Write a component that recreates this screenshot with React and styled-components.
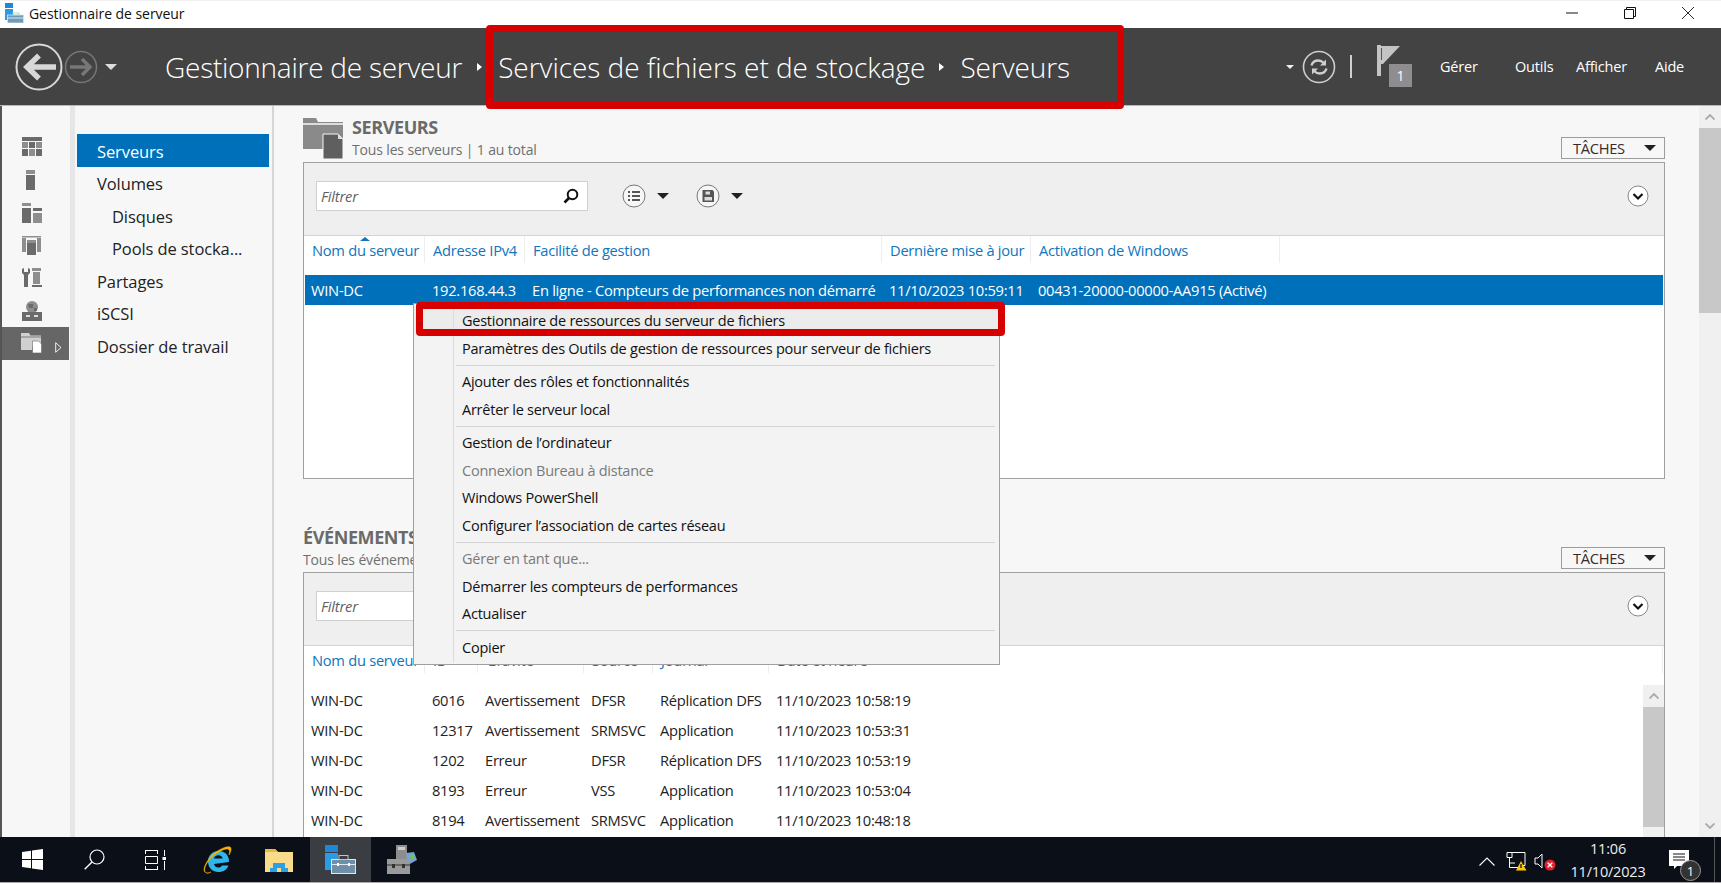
import React from "react";
import styled, { createGlobalStyle } from "styled-components";

const FONT = `"Open Sans", "Noto Sans", "Liberation Sans", sans-serif`;

const Global = createGlobalStyle`
  html, body { margin: 0; padding: 0; background: #fff; overflow: hidden; }
  * { box-sizing: border-box; }
  body { font-family: ${FONT}; }
`;

const Root = styled.div`
  position: relative; width: 1721px; height: 883px; overflow: hidden;
  display: flex; flex-direction: column; font-size: 14.5px; color: #1a1a1a;
`;

/* ---------- title bar ---------- */
const TitleBar = styled.div`
  height: 28px; flex: none; display: flex; align-items: center; padding-left: 4px; background: #fff; border-top: 1px solid #f2f2f2;
`;
const TitleText = styled.span`margin-left: 5px; font-size: 14px; color: #111; letter-spacing: -0.06px; margin-top: -3px;`;
const WinControls = styled.div`margin-left: auto; display: flex; height: 100%; align-items: center; padding-right: 27px; gap: 46px; padding-bottom: 3px;`;

/* ---------- header ---------- */
const Header = styled.header`
  height: 78px; flex: none; background: #434343; border-bottom: 1px solid #b9b9b9; display: flex; align-items: center; padding-left: 15px; color: #fff;
`;
const NavGroup = styled.div`display: flex; align-items: center; width: 150px; gap: 1px;`;
const Crumbs = styled.div`display: flex; align-items: center; font-weight: 300; font-size: 28px; padding-top: 1px;`;
const Crumb = styled.span`white-space: nowrap; color: #fff; margin-left: ${p => p.$ml || 0}px; letter-spacing: ${p => p.$ls || 0}px;`;
const Tri = styled.span`
  display: inline-block; width: 0; height: 0; margin-left: ${p => p.$ml || 0}px;
  border-left: 5px solid #fff; border-top: 4.5px solid transparent; border-bottom: 4.5px solid transparent;
`;
const HeaderRight = styled.div`margin-left: auto; display: flex; align-items: center; height: 100%;`;
const MenuLink = styled.span`
  font-size: 14.5px; color: #fff; width: ${p => p.$w}px; letter-spacing: -0.2px;
`;
const FlagWrap = styled.div`position: relative; width: 36px; height: 44px; margin-left: 25px; margin-right: 27px;`;
const FlagBadge = styled.div`
  position: absolute; left: 12px; top: 19px; width: 23px; height: 23px; background: #8f8d90; color: #fff;
  font-size: 14px; display: flex; align-items: center; justify-content: center;
`;
const HeaderSep = styled.div`width: 2px; height: 23px; background: #cfcfcf; margin-left: 14px;`;

/* ---------- body ---------- */
const Body = styled.div`flex: 1; min-height: 0; display: flex; background: #f7f7f7; border-left: 2px solid #555;`;
const Rail = styled.nav`
  width: 73px; flex: none; border-right: 5px solid #e6e6e6; padding-top: 25px; display: flex; flex-direction: column; background: #f7f7f7;
`;
const RailItem = styled.div`
  height: 32.7px; display: flex; align-items: center; padding-left: 19px; position: relative; width: 67px; flex: none;
  background: ${p => (p.$active ? "#666" : "transparent")};
`;
const RailArrow = styled.span`
  position: absolute; left: 53px; top: 11px; width: 7px; height: 11px;
`;
const SideNav = styled.nav`
  width: 199px; flex: none; border-right: 2px solid #d6d6d6; padding: 28px 0 0 2px; background: #f7f7f7; display: flex; flex-direction: column;
`;
const NavItem = styled.div`
  height: 32.5px; width: 192px; display: flex; align-items: center; padding-left: ${p => (p.$sub ? 35 : 20)}px; padding-top: 2px; font-size: 16.5px; letter-spacing: -0.1px;
  background: ${p => (p.$active ? "#0070bb" : "transparent")}; color: ${p => (p.$active ? "#fff" : "#222")};
`;
const Main = styled.main`flex: 1; min-width: 0; overflow: hidden; padding-left: 29px; display: flex; flex-direction: column; padding-right: 34px;`;
const PageScroll = styled.div`
  width: 22px; flex: none; background: #f0f0f0; display: flex; flex-direction: column; align-items: stretch; position: relative;
`;
const ScrollBtn = styled.div`height: 22px; display: flex; align-items: center; justify-content: center; flex: none;`;
const ScrollThumb = styled.div`height: ${p => p.$h}px; background: #c8c8c8; flex: none;`;
const ScrollFill = styled.div`flex: 1;`;

const SectionHead = styled.div`
  height: ${p => p.$h}px; display: flex; align-items: flex-end; position: relative; flex: none; margin-top: ${p => p.$mt || 0}px;
`;
const SectionIcon = styled.div`width: 49px; align-self: flex-start; padding-top: 12px;`;
const Titles = styled.div`display: flex; flex-direction: column; padding-bottom: 3px;`;
const SectionTitle = styled.div`font-size: 18px; font-weight: 700; color: #6a6a6a; line-height: 24px; letter-spacing: -0.4px; padding-bottom: 1px;`;
const SectionSub = styled.div`font-size: 14px; color: #6f6f6f; line-height: 19px; letter-spacing: -0.15px;`;
const TasksBtn = styled.div`
  margin-left: auto; width: 104px; height: 22px; margin-bottom: 3px; border: 1px solid #9d9d9d; background: #f7f7f7; display: flex; align-items: center;
  padding-left: 11px; font-size: 14.7px; color: #3a2a2a; justify-content: space-between; padding-right: 8px; letter-spacing: -0.3px;
`;
const Caret = styled.span`
  display: inline-block; width: 0; height: 0; border-left: ${p => p.$s || 6}px solid transparent; border-right: ${p => p.$s || 6}px solid transparent;
  border-top: ${p => p.$s || 6}px solid ${p => p.$c || "#222"};
  ${p => p.$ml && `margin-left: ${p.$ml}px;`} ${p => p.$mr && `margin-right: ${p.$mr}px;`}
`;

const Panel = styled.section`
  flex: none; height: ${p => p.$h}px; border: 1px solid #a0a0a0; background: #fff; display: flex; flex-direction: column; padding: 0 1px;
  ${p => p.$open && "border-bottom: 0;"}
`;
const Toolbar = styled.div`
  height: 73px; flex: none; background: #efefef; border-bottom: 1px solid #d4d4d4; margin: 0 -1px; display: flex; align-items: center; padding-left: 12px; padding-right: 15px; padding-bottom: 6px;
`;
const FilterBox = styled.div`
  width: 272px; height: 30px; border: 1px solid #cfcfcf; background: #fff; display: flex; align-items: center; padding: 0 8px 0 4px; justify-content: space-between;
  font-style: italic; color: #5f5f5f; font-size: 14.7px; letter-spacing: -0.2px;
`;
const ToolGroup = styled.div`display: flex; align-items: center; gap: 11px; margin-left: ${p => p.$ml}px;`;
const RightEnd = styled.div`margin-left: auto; padding-top: 3px;`;

const Cols = styled.div`
  display: grid; grid-template-columns: ${p => p.$cols};
`;
const HeadRow = styled(Cols)`height: 39px; flex: none; background: #fff; position: relative;`;
const HeadCell = styled.div`
  font-size: 14.7px; color: #0f75bc; padding: 1px 0 0 8px; height: 27px; display: flex; align-items: center; white-space: nowrap; letter-spacing: -0.28px;
  border-right: 1px solid #eee; overflow: hidden;
  &:first-of-type { padding-left: 7px; }
`;
const SortMark = styled.span`
  position: absolute; left: 55px; top: 1px; width: 0; height: 0; border-left: 5px solid transparent; border-right: 5px solid transparent; border-bottom: 4px solid #0f75bc;
`;
const DataRow = styled(Cols)`
  height: ${p => p.$h || 30}px; align-items: center;
  background: ${p => (p.$sel ? "#0070bb" : "#fff")}; color: ${p => (p.$sel ? "#fff" : "#222")};
`;
const DataCell = styled.div`
  font-size: 14.7px; padding-left: 7px; white-space: nowrap; letter-spacing: -0.28px;
  &:first-child { padding-left: 6px; }
`;
const RowsWrap = styled.div`display: flex; flex: 1; min-height: 0;`;
const RowsCol = styled.div`flex: 1; min-width: 0;`;
const InnerScroll = styled.div`width: 21px; margin-right: -1px; flex: none; background: #f0f0f0; display: flex; flex-direction: column;`;

/* ---------- context menu ---------- */
const Menu = styled.div`
  position: absolute; left: 413px; top: 303px; width: 587px; height: 362px; background: #f3f3f3; border: 1px solid #a0a0a0; padding: 3px 0 0 0; z-index: 5;
`;
const MenuGutter = styled.div`position: absolute; left: 39px; top: 1px; bottom: 1px; width: 1px; background: #dcdcdc;`;
const MenuRow = styled.div`
  height: 27.5px; display: flex; align-items: center; padding-left: 48px; font-size: 14.5px; letter-spacing: -0.24px; white-space: nowrap;
  color: ${p => (p.$off ? "#7a7a7a" : "#111")}; background: ${p => (p.$hot ? "#ececec" : "transparent")};
`;
const MenuSep = styled.div`height: 6px; display: flex; align-items: center; margin-left: 42px; margin-right: 4px; &::after { content: ""; flex: 1; height: 1px; background: #d4d4d4; }`;

const RedBox = styled.div`
  position: absolute; left: ${p => p.$x}px; top: ${p => p.$y}px; width: ${p => p.$w}px; height: ${p => p.$h}px; border: 7px solid #d60000; border-radius: 4px; z-index: 9; pointer-events: none;
`;

/* ---------- taskbar ---------- */
const Taskbar = styled.footer`
  height: 46px; flex: none; background: #0a0f18; border-bottom: 1px solid #aaa; display: flex; align-items: center; color: #fff; padding-left: 2px;
`;
const TaskBtn = styled.div`
  width: 61.5px; height: 100%; display: flex; align-items: center; justify-content: center; background: ${p => (p.$active ? "#3a3d42" : "transparent")};
`;
const Tray = styled.div`margin-left: auto; display: flex; align-items: center; height: 100%;`;
const TrayIcon = styled.div`width: ${p => p.$w}px; display: flex; justify-content: center; padding-top: 4px;`;
const Clock = styled.div`
  width: 90px; margin-left: 5px; display: flex; flex-direction: column; align-items: center; font-size: 14.5px; line-height: 23px; color: #eee; letter-spacing: -0.2px;
`;
const Notif = styled.div`position: relative; width: 50px; height: 100%; margin-left: 11px; display: flex; align-items: center; padding-left: 5px;`;
const NotifBadge = styled.div`
  position: absolute; left: 16px; top: 23px; width: 21px; height: 21px; border-radius: 50%; background: #333; border: 1.5px solid #999; color: #fff; font-size: 13px;
  display: flex; align-items: center; justify-content: center;
`;
const Corner = styled.div`width: 1px; height: 100%; background: #555; margin-right: 6px;`;

/* ---------- icons ---------- */
const TitleIcon = () => (
  <svg width="20" height="20" viewBox="0 0 20 20" style={{ marginTop: -3 }}>
    <rect x="1" y="0" width="8" height="5" fill="#1e88d8" />
    <rect x="1" y="6" width="8" height="11" fill="#2b9be8" />
    <rect x="3.500" y="12" width="16" height="8" fill="#6f9ab8" stroke="#d5e4ee" strokeWidth=".8" />
    <rect x="3.500" y="14.500" width="16" height="1" fill="#dbe7ef" />
    <rect x="9" y="10" width="6" height="2" fill="none" stroke="#9db" strokeWidth=".8" />
  </svg>
);
const TaskServerIcon = () => (
  <svg width="31" height="29" viewBox="0 0 31 29">
    <rect x="0" y="0" width="13" height="7" fill="#1e88d8" />
    <rect x="0" y="8" width="13" height="17" fill="#2b9be8" />
    <rect x="6.500" y="14.500" width="24" height="14" fill="#6f8fa8" stroke="#dde8ef" strokeWidth="1" />
    <rect x="14" y="10.500" width="9" height="4" fill="none" stroke="#b7c7d2" strokeWidth="1" />
    <rect x="6.500" y="19" width="24" height="1" fill="#dde8ef" />
    <rect x="12" y="18" width="2" height="3" fill="#fff" />
    <rect x="23" y="18" width="2" height="3" fill="#fff" />
  </svg>
);
const BackIcon = () => (
  <svg width="48" height="48" viewBox="0 0 48 48">
    <circle cx="24" cy="24" r="22.500" fill="none" stroke="#d8d8d8" strokeWidth="2" />
    <path d="M41 24H14M24 12.500 12 24l12 11.500" fill="none" stroke="#d8d8d8" strokeWidth="5.500" />
  </svg>
);
const ForwardIcon = () => (
  <svg width="34" height="34" viewBox="0 0 34 34">
    <circle cx="17" cy="17" r="15.500" fill="none" stroke="#777" strokeWidth="1.500" />
    <path d="M6 17h20M18 9l8 8-8 8" fill="none" stroke="#777" strokeWidth="3.500" />
  </svg>
);
const RefreshIcon = () => (
  <svg width="34" height="34" viewBox="0 0 34 34">
    <circle cx="17" cy="17" r="15.500" fill="none" stroke="#cfcfcf" strokeWidth="1.600" />
    <path d="M9.500 15.500c1-3.500 3.800-5 6.800-5 2.400 0 4 1 5.200 2.300" fill="none" stroke="#cfcfcf" strokeWidth="2.400" />
    <path d="M24 9.500v6h-6z" fill="#cfcfcf" />
    <path d="M24.500 18.500c-1 3.500-3.800 5-6.800 5-2.400 0-4-1-5.200-2.300" fill="none" stroke="#cfcfcf" strokeWidth="2.400" />
    <path d="M10 24.500v-6h6z" fill="#cfcfcf" />
  </svg>
);
const FlagIcon = () => (
  <svg width="24" height="32" viewBox="0 0 24 32">
    <rect x="0" y="0" width="4" height="31" fill="#c4c4c4" />
    <path d="M4 1h19L6 19H4z" fill="#c4c4c4" />
    <rect x="4" y="3" width="1" height="12" fill="#555" />
  </svg>
);
const G = "#6b6b6b", L = "#8e8e8e";
const RailGrid = () => (
  <svg width="22" height="20" viewBox="0 0 22 20">
    <rect x="1" y="0" width="20" height="4" fill={G} />
    <rect x="1" y="5" width="6" height="6" fill={L} /><rect x="8" y="5" width="6" height="6" fill={G} /><rect x="15" y="5" width="6" height="6" fill={L} />
    <rect x="1" y="12" width="6" height="7" fill={G} /><rect x="8" y="12" width="6" height="7" fill={L} /><rect x="15" y="12" width="6" height="7" fill={G} />
  </svg>
);
const RailServer = () => (
  <svg width="22" height="20" viewBox="0 0 22 20">
    <rect x="5" y="0" width="9" height="4" fill={L} /><rect x="5" y="5" width="9" height="15" fill={G} />
  </svg>
);
const RailAll = () => (
  <svg width="22" height="20" viewBox="0 0 22 20">
    <rect x="1" y="0" width="9" height="3" fill={L} /><rect x="1" y="5" width="9" height="15" fill={G} />
    <rect x="12" y="5" width="9" height="3" fill={G} /><rect x="12" y="10" width="9" height="10" fill={L} />
  </svg>
);
const RailAd = () => (
  <svg width="22" height="20" viewBox="0 0 22 20">
    <path d="M1 1h19v1.500H1z" fill={L} />
    <rect x="1" y="3" width="4" height="14" fill={L} /><rect x="16" y="3" width="4" height="14" fill={L} />
    <rect x="6" y="5" width="9" height="15" fill={G} /><rect x="6" y="5" width="9" height="3" fill={L} />
  </svg>
);
const RailTools = () => (
  <svg width="22" height="20" viewBox="0 0 22 20">
    <path d="M1 1v4l2 2v12h4V7l2-2V1L7 0v4H3V0z" fill={G} />
    <rect x="11" y="0" width="9" height="3" fill={L} /><rect x="12" y="4" width="7" height="12" fill={L} />
    <rect x="11" y="17" width="10" height="2" fill={G} />
  </svg>
);
const RailDns = () => (
  <svg width="22" height="20" viewBox="0 0 22 20">
    <circle cx="11" cy="6" r="6" fill={L} /><path d="M7 3h5v4H8zM13 7h3v3h-3z" fill={G} />
    <rect x="1" y="11" width="20" height="9" fill={G} /><rect x="5" y="14" width="4" height="2" fill="#ddd" /><rect x="13" y="14" width="4" height="2" fill="#ddd" />
  </svg>
);
const RailFiles = () => (
  <svg width="21" height="20" viewBox="0 0 21 20">
    <path d="M0 0h8l1.500 2.500H20V14h-9v3H0z" fill="#d0d0d0" />
    <path d="M0 4h20" stroke="#666" strokeWidth=".8" />
    <path d="M11.500 8h6l3 3v9h-9z" fill="#fff" stroke="#666" strokeWidth=".6" />
  </svg>
);
const FolderIcon = () => (
  <svg width="41" height="41" viewBox="0 0 41 41">
    <path d="M0 0h13l2 4h25v37H20V31H0z" fill="#8a8a8a" />
    <path d="M0 6h40" stroke="#f7f7f7" strokeWidth="1.500" />
    <path d="M20 16h15l5 5v20H20z" fill="#5f5f5f" stroke="#f7f7f7" strokeWidth="1" />
    <path d="M35 16v5h5" fill="#ddd" />
  </svg>
);
const SearchIcon = () => (
  <svg width="16" height="16" viewBox="0 0 16 16">
    <circle cx="9.500" cy="6.500" r="4.800" fill="none" stroke="#111" strokeWidth="2" />
    <path d="M6 10 1.500 14.500" stroke="#111" strokeWidth="2.600" />
  </svg>
);
const TaskSearch = () => (
  <svg width="21" height="21" viewBox="0 0 21 21">
    <circle cx="13" cy="8" r="7" fill="none" stroke="#fff" strokeWidth="1.200" />
    <path d="M8 13 .7 20.300" stroke="#fff" strokeWidth="1.400" />
  </svg>
);
const ListCircle = () => (
  <svg width="24" height="24" viewBox="0 0 24 24">
    <circle cx="12" cy="12" r="11" fill="#f6f6f6" stroke="#777" strokeWidth="1" />
    <path d="M6 8h2M6 12h2M6 16h2M10 8h8M10 12h8M10 16h8" stroke="#555" strokeWidth="2" />
  </svg>
);
const SaveCircle = () => (
  <svg width="24" height="24" viewBox="0 0 24 24">
    <circle cx="12" cy="12" r="11" fill="#f6f6f6" stroke="#777" strokeWidth="1" />
    <path d="M6.500 6h10l1.500 1.500V18H6.500z" fill="#555" />
    <rect x="9.500" y="7.500" width="4.500" height="3" fill="#ddd" />
    <rect x="8.500" y="13" width="7.500" height="3.500" fill="#ddd" />
  </svg>
);
const ChevCircle = () => (
  <svg width="22" height="22" viewBox="0 0 22 22">
    <circle cx="11" cy="11" r="10" fill="#fff" stroke="#888" strokeWidth="1" />
    <path d="M6.500 9 11 13.500 15.500 9" fill="none" stroke="#111" strokeWidth="2.200" />
  </svg>
);
const ChevUp = () => <svg width="10" height="6" viewBox="0 0 10 6"><path d="M.5 5.500 5 1l4.500 4.500" fill="none" stroke="#aaa" strokeWidth="1.800" /></svg>;
const ChevDown = () => <svg width="10" height="6" viewBox="0 0 10 6"><path d="M.5.500 5 5l4.500-4.500" fill="none" stroke="#aaa" strokeWidth="1.800" /></svg>;

const WinLogo = () => (
  <svg width="21" height="21" viewBox="0 0 21 21">
    <path d="M0 3 9 1.700V10H0zM10 1.500 21 0v10H10zM0 11h9v8.300L0 18zM10 11h11v10L10 19.500z" fill="#fff" />
  </svg>
);
const TaskView = () => (
  <svg width="21" height="20" viewBox="0 0 21 20" fill="none" stroke="#fff" strokeWidth="1">
    <path d="M0 .500h13M.500 6.500h12v7H.500zM0 19.500h13M19.500 0v6M19.500 11v9" />
    <rect x="17.500" y="7" width="4" height="3" fill="#fff" stroke="none" />
    <path d="M.5 1v3M12.500 1v3M.5 16v3M12.500 16v3" />
  </svg>
);
const IeIcon = () => (
  <svg width="30" height="30" viewBox="0 0 30 30">
    <path d="M27 17c.3-6.500-4-11-10.500-11C9.500 6 6 11.500 6 16.500 6 23 11 27 16.500 27c4.500 0 8.300-2 10-6.500h-6.500c-1 1.500-2 2-3.500 2-2.500 0-4.300-1.800-4.500-3.500zM12 13.500c.3-2 2-3.300 4.400-3.300s4 1.300 4.300 3.300z" fill="#2fb7ec" fillRule="evenodd" />
    <path d="M3 27C-1 25 7 11 14 7c6-4 11-6 14-5 2 1 1 5-1 8 .5-2.500 1-5-.7-5.800C23 3 17 7 14 9 7 14 1 22 3 27c1 1.500 4 1 6 0-2 1.500-5 1.500-6 0z" fill="#f4b400" stroke="#f4b400" strokeWidth=".5" />
  </svg>
);
const ExplorerIcon = () => (
  <svg width="28" height="24" viewBox="0 0 28 24">
    <path d="M0 1h10l3 3h15v20H0z" fill="#f8dc8c" />
    <path d="M0 1h10l3 3H0z" fill="#e8b93e" />
    <path d="M5 24v-4h3v-5h12v5h3v4h-7v-4h-4v4z" fill="#2aa1e6" />
  </svg>
);
const ToolboxIcon = () => (
  <svg width="32" height="32" viewBox="0 0 32 32">
    <rect x="10" y="1" width="11" height="18" fill="#8d8d8d" />
    <rect x="12" y="3" width="7" height="3" fill="#ccc" />
    <path d="M20 9l8-1 3 8-9 5z" fill="#7b9fd6" />
    <path d="M25 10l4 1-2 4-4-1z" fill="#69c95a" />
    <path d="M1 15h21l2 6v9H1z" fill="#9a9a9a" /><path d="M1 21h23" stroke="#555" strokeWidth="1.500" />
    <rect x="6" y="20" width="3" height="4" fill="#333" /><rect x="16" y="20" width="3" height="4" fill="#333" />
  </svg>
);
const NetIcon = () => (
  <svg width="22" height="19" viewBox="0 0 22 19">
    <path d="M3 .500h16v13h-6M1 .500h5v5H1zM3.500 5.500v10M3.500 15.500H12M3.500 11H9" fill="none" stroke="#fff" strokeWidth="1" />
    <path d="M10 18.500 15 9l5.500 9.500z" fill="#fbc707" /><path d="M15 12v4" stroke="#111" strokeWidth="1.300" />
  </svg>
);
const SpeakerIcon = () => (
  <svg width="22" height="19" viewBox="0 0 22 19">
    <path d="M1 6h3l4-4v14l-4-4H1z" fill="none" stroke="#fff" strokeWidth="1" />
    <circle cx="16" cy="13" r="5.500" fill="#e2202f" />
    <path d="M13.700 10.700l4.600 4.600m0-4.600-4.600 4.600" stroke="#fff" strokeWidth="1.300" />
  </svg>
);
const NotifIcon = () => (
  <svg width="21" height="19" viewBox="0 0 21 19">
    <path d="M0 0h20v16H8l-3 3v-3H0z" fill="#fff" />
    <path d="M4 4h12M4 7h12M4 10h12" stroke="#111" strokeWidth="1.200" />
  </svg>
);
const ChevTray = () => <svg width="16" height="9" viewBox="0 0 16 9"><path d="M.5 8.500 8 1l7.500 7.500" fill="none" stroke="#fff" strokeWidth="1.100" /></svg>;

/* ---------- data ---------- */
const navItems = [
  { t: "Serveurs", active: true }, { t: "Volumes" }, { t: "Disques", sub: true },
  { t: "Pools de stocka...", sub: true }, { t: "Partages" }, { t: "iSCSI" }, { t: "Dossier de travail" },
];
const SERVER_COLS = "120px 100px 357px 149px 249px 1fr";
const EVENT_COLS = "120px 53px 106px 69px 116px 1fr";
const events = [
  ["WIN-DC", "6016", "Avertissement", "DFSR", "Réplication DFS", "11/10/2023 10:58:19"],
  ["WIN-DC", "12317", "Avertissement", "SRMSVC", "Application", "11/10/2023 10:53:31"],
  ["WIN-DC", "1202", "Erreur", "DFSR", "Réplication DFS", "11/10/2023 10:53:19"],
  ["WIN-DC", "8193", "Erreur", "VSS", "Application", "11/10/2023 10:53:04"],
  ["WIN-DC", "8194", "Avertissement", "SRMSVC", "Application", "11/10/2023 10:48:18"],
];
const menu = [
  { t: "Gestionnaire de ressources du serveur de fichiers", hot: true },
  { t: "Paramètres des Outils de gestion de ressources pour serveur de fichiers" }, "-",
  { t: "Ajouter des rôles et fonctionnalités" }, { t: "Arrêter le serveur local" }, "-",
  { t: "Gestion de l’ordinateur" }, { t: "Connexion Bureau à distance", off: true },
  { t: "Windows PowerShell" }, { t: "Configurer l’association de cartes réseau" }, "-",
  { t: "Gérer en tant que...", off: true }, { t: "Démarrer les compteurs de performances" }, { t: "Actualiser" }, "-",
  { t: "Copier" },
];

const TableToolbar = () => (
  <Toolbar>
    <FilterBox>Filtrer<SearchIcon /></FilterBox>
    <ToolGroup $ml={34}><ListCircle /><Caret /></ToolGroup>
    <ToolGroup $ml={27}><SaveCircle /><Caret /></ToolGroup>
    <RightEnd><ChevCircle /></RightEnd>
  </Toolbar>
);

export default function App() {
  const railIcons = [RailGrid, RailServer, RailAll, RailAd, RailTools, RailDns];
  return (
    <Root>
      <Global />
      <TitleBar>
        <TitleIcon />
        <TitleText>Gestionnaire de serveur</TitleText>
        <WinControls>
          <svg width="12" height="2" viewBox="0 0 12 2"><path d="M0 1h12" stroke="#111" /></svg>
          <svg width="12" height="12" viewBox="0 0 12 12"><path d="M.5 2.500h9v9h-9zM2.500 2.500V.5h9v9h-2" fill="none" stroke="#111" /></svg>
          <svg width="12" height="12" viewBox="0 0 12 12"><path d="M0 0l12 12M12 0 0 12" stroke="#111" strokeWidth=".9" /></svg>
        </WinControls>
      </TitleBar>

      <Header>
        <NavGroup>
          <BackIcon /><ForwardIcon />
          <Caret $s={6} $c="#ddd" $ml={6} />
        </NavGroup>
        <Crumbs>
          <Crumb $ls={-0.25}>Gestionnaire de serveur</Crumb>
          <Tri $ml={15} />
          <Crumb $ml={16} $ls={-0.03}>Services de fichiers et de stockage</Crumb>
          <Tri $ml={14} />
          <Crumb $ml={16} $ls={-0.1}>Serveurs</Crumb>
        </Crumbs>
        <HeaderRight>
          <Caret $s={4} $c="#eee" $mr={8} />
          <RefreshIcon />
          <HeaderSep />
          <FlagWrap><FlagIcon /><FlagBadge>1</FlagBadge></FlagWrap>
          <MenuLink $w={75}>Gérer</MenuLink>
          <MenuLink $w={61}>Outils</MenuLink>
          <MenuLink $w={79}>Afficher</MenuLink>
          <MenuLink $w={66}>Aide</MenuLink>
        </HeaderRight>
      </Header>

      <Body>
        <Rail>
          {railIcons.map((I, i) => <RailItem key={i}><I /></RailItem>)}
          <RailItem $active>
            <RailFiles />
            <RailArrow><svg width="7" height="11" viewBox="0 0 7 11"><path d="M.7.7 6 5.500.7 10.300z" fill="none" stroke="#eee" /></svg></RailArrow>
          </RailItem>
        </Rail>
        <SideNav>
          {navItems.map(n => <NavItem key={n.t} $active={n.active} $sub={n.sub}>{n.t}</NavItem>)}
        </SideNav>
        <Main>
          <SectionHead $h={56}>
            <SectionIcon><FolderIcon /></SectionIcon>
            <Titles>
              <SectionTitle>SERVEURS</SectionTitle>
              <SectionSub>Tous les serveurs | 1 au total</SectionSub>
            </Titles>
            <TasksBtn>TÂCHES<Caret /></TasksBtn>
          </SectionHead>
          <Panel $h={317}>
            <TableToolbar />
            <HeadRow $cols={SERVER_COLS}>
              <SortMark />
              {["Nom du serveur", "Adresse IPv4", "Facilité de gestion", "Dernière mise à jour", "Activation de Windows"].map(h => <HeadCell key={h}>{h}</HeadCell>)}
            </HeadRow>
            <DataRow $sel $cols={SERVER_COLS}>
              <DataCell>WIN-DC</DataCell><DataCell>192.168.44.3</DataCell>
              <DataCell>En ligne - Compteurs de performances non démarré</DataCell>
              <DataCell>11/10/2023 10:59:11</DataCell><DataCell>00431-20000-00000-AA915 (Activé)</DataCell>
            </DataRow>
          </Panel>

          <SectionHead $h={46} $mt={47}>
            <Titles>
              <SectionTitle>ÉVÉNEMENTS</SectionTitle>
              <SectionSub>Tous les événements | 48 au total</SectionSub>
            </Titles>
            <TasksBtn>TÂCHES<Caret /></TasksBtn>
          </SectionHead>
          <Panel $h={300} $open>
            <TableToolbar />
            <HeadRow $cols={EVENT_COLS}>
              {["Nom du serveur", "ID", "Gravité", "Source", "Journal", "Date et heure"].map(h => <HeadCell key={h}>{h}</HeadCell>)}
            </HeadRow>
            <RowsWrap>
              <RowsCol>
                {events.map(r => (
                  <DataRow key={r[1]} $cols={EVENT_COLS}>
                    {r.map((c, i) => <DataCell key={i}>{c}</DataCell>)}
                  </DataRow>
                ))}
              </RowsCol>
              <InnerScroll>
                <ScrollBtn><ChevUp /></ScrollBtn>
                <ScrollThumb $h={120} />
              </InnerScroll>
            </RowsWrap>
          </Panel>
        </Main>
        <PageScroll>
          <ScrollBtn><ChevUp /></ScrollBtn>
          <ScrollThumb $h={185} />
          <ScrollFill />
          <ScrollBtn><ChevDown /></ScrollBtn>
        </PageScroll>
      </Body>

      <Taskbar>
        <TaskBtn><WinLogo /></TaskBtn>
        <TaskBtn><TaskSearch /></TaskBtn>
        <TaskBtn><TaskView /></TaskBtn>
        <TaskBtn><IeIcon /></TaskBtn>
        <TaskBtn><ExplorerIcon /></TaskBtn>
        <TaskBtn $active><TaskServerIcon /></TaskBtn>
        <TaskBtn><ToolboxIcon /></TaskBtn>
        <Tray>
          <TrayIcon $w={30}><ChevTray /></TrayIcon>
          <TrayIcon $w={30}><NetIcon /></TrayIcon>
          <TrayIcon $w={26}><SpeakerIcon /></TrayIcon>
          <Clock><span>11:06</span><span>11/10/2023</span></Clock>
          <Notif><NotifIcon /><NotifBadge>1</NotifBadge></Notif>
          <Corner />
        </Tray>
      </Taskbar>

      <Menu>
        <MenuGutter />
        {menu.map((m, i) => m === "-" ? <MenuSep key={i} /> : <MenuRow key={i} $off={m.off} $hot={m.hot}>{m.t}</MenuRow>)}
      </Menu>
      <RedBox $x={486} $y={25} $w={638} $h={84} />
      <RedBox $x={416} $y={302} $w={589} $h={34} />
    </Root>
  );
}
